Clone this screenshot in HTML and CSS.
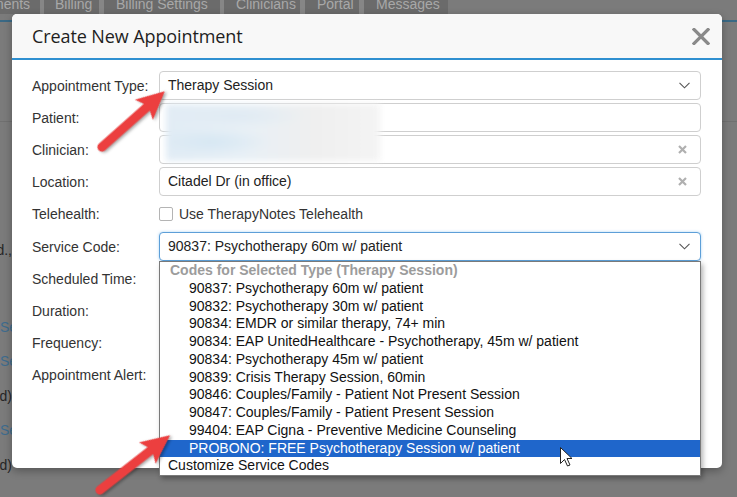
FILE: index.html
```html
<!DOCTYPE html>
<html>
<head>
<meta charset="utf-8">
<link rel="stylesheet" href="styles.css">
</head>
<body>
<div class="page">
  <nav class="tabs">
    <span class="tab t0">ments</span>
    <span class="tab t1">Billing</span>
    <span class="tab t2">Billing Settings</span>
    <span class="tab t3">Clinicians</span>
    <span class="tab t4">Portal</span>
    <span class="tab t5">Messages</span>
  </nav>
  <div class="rule-blue"></div>
  <div class="rule-gray"></div>
  <div class="frag f1 end"><span>Sched.,</span></div>
  <div class="frag f2 link"><span>Session</span></div>
  <div class="frag f3 link"><span>Session</span></div>
  <div class="frag f4 end"><span>(Ended)</span></div>
  <div class="frag f5 link"><span>Session</span></div>
  <div class="frag f6 end"><span>(Ended)</span></div>
</div>

<div class="modal">
  <div class="modal-head">
    <h1>Create New Appointment</h1>
    <svg class="close" width="18" height="17" viewBox="0 0 18 17"><path d="M2 1.5 L16 15.5 M16 1.5 L2 15.5" stroke="#8a8a8a" stroke-width="3.2" stroke-linecap="square"/></svg>
  </div>
  <div class="modal-body">
    <div class="row">
      <label>Appointment Type:</label>
      <div class="field">Therapy Session
        <svg class="chev" width="11" height="7" viewBox="0 0 11 7"><path d="M0.5 0.8 L5.5 5.8 L10.5 0.8" fill="none" stroke="#555" stroke-width="1.1"/></svg>
      </div>
    </div>
    <div class="row">
      <label>Patient:</label>
      <div class="field"></div>
    </div>
    <div class="row">
      <label>Clinician:</label>
      <div class="field">
        <svg class="clear" width="9" height="9" viewBox="0 0 9 9"><path d="M1 1 L8 8 M8 1 L1 8" stroke="#b0b0b0" stroke-width="2.2"/></svg>
      </div>
    </div>
    <div class="row">
      <label>Location:</label>
      <div class="field">Citadel Dr (in office)
        <svg class="clear" width="9" height="9" viewBox="0 0 9 9"><path d="M1 1 L8 8 M8 1 L1 8" stroke="#b0b0b0" stroke-width="2.2"/></svg>
      </div>
    </div>
    <div class="row tall">
      <label>Telehealth:</label>
      <div class="check-wrap"><span class="checkbox"></span>Use TherapyNotes Telehealth</div>
    </div>
    <div class="row">
      <label>Service Code:</label>
      <div class="field focus">90837: Psychotherapy 60m w/ patient
        <svg class="chev" width="11" height="7" viewBox="0 0 11 7"><path d="M0.5 0.8 L5.5 5.8 L10.5 0.8" fill="none" stroke="#555" stroke-width="1.1"/></svg>
      </div>
    </div>
    <div class="row"><label>Scheduled Time:</label></div>
    <div class="row"><label>Duration:</label></div>
    <div class="row"><label>Frequency:</label></div>
    <div class="row"><label>Appointment Alert:</label></div>
  </div>

  <div class="redact"></div>

  <div class="dropdown">
    <div class="grp">Codes for Selected Type (Therapy Session)</div>
    <div class="opt">90837: Psychotherapy 60m w/ patient</div>
    <div class="opt">90832: Psychotherapy 30m w/ patient</div>
    <div class="opt">90834: EMDR or similar therapy, 74+ min</div>
    <div class="opt">90834: EAP UnitedHealthcare - Psychotherapy, 45m w/ patient</div>
    <div class="opt">90834: Psychotherapy 45m w/ patient</div>
    <div class="opt">90839: Crisis Therapy Session, 60min</div>
    <div class="opt">90846: Couples/Family - Patient Not Present Session</div>
    <div class="opt">90847: Couples/Family - Patient Present Session</div>
    <div class="opt">99404: EAP Cigna - Preventive Medicine Counseling</div>
    <div class="opt sel">PROBONO: FREE Psychotherapy Session w/ patient</div>
    <div class="opt top">Customize Service Codes</div>
  </div>
</div>

<svg class="annot" width="737" height="497" viewBox="0 0 737 497">
  <g class="arrow" transform="translate(102,147) rotate(-41.6)">
    <path d="M0,-4.6 L60,-4.6 L56,-13.5 L84,0 L56,13.5 L60,4.6 L0,4.6 A4.6,4.6 0 0 1 0,-4.6 Z" fill="#ec3f3f"/>
  </g>
  <g class="arrow" transform="translate(100,490) rotate(-38)">
    <path d="M0,-4.6 L64,-4.6 L60,-13.5 L89,0 L60,13.5 L64,4.6 L0,4.6 A4.6,4.6 0 0 1 0,-4.6 Z" fill="#ec3f3f"/>
  </g>
  <path d="M560.5,447.5 L560.5,463.5 L564.5,459.5 L567.5,466 L570,465 L567,458.5 L572,458.5 Z" fill="#fff" stroke="#222" stroke-width="1" stroke-linejoin="round"/>
</svg>
</body>
</html>
```
FILE: styles.css
```css
* { box-sizing: border-box; margin: 0; padding: 0; }
html, body { width: 737px; height: 497px; overflow: hidden; }
body {
  background: #7b7b7b;
  font-family: "Liberation Sans", Arial, sans-serif;
  font-size: 14px;
  color: #333;
  position: relative;
}

/* background page */
.tabs { display: flex; height: 14px; overflow: hidden; }
.tab {
  background: #6b6b6b;
  color: #a8a8a8;
  line-height: 8px;
  height: 14px;
  padding-left: 11px;
  white-space: nowrap;
  overflow: hidden;
}
.t0 { width: 48px; margin-left: -8px; padding-left: 0; }
.t1 { width: 59px; border-left: 4px solid #868686; }
.t2 { width: 121px; border-left: 5px solid #868686; padding-left: 12px; }
.t3 { width: 80px; border-left: 4px solid #868686; padding-left: 12px; }
.t4 { width: 59px; border-left: 5px solid #868686; padding-left: 12px; }
.t5 { width: 89px; border-left: 5px solid #868686; padding-left: 12px; }

.rule-blue { margin-top: 6px; height: 2px; background: #3a6985; }
.rule-gray { margin-top: 99px; height: 1px; background: #707070; }

.frag {
  width: 16px;
  height: 16px;
  line-height: 16px;
  overflow: hidden;
  display: flex;
  white-space: nowrap;
  color: #262626;
}
.frag span { flex: none; }
.frag.end { justify-content: flex-end; width: 12px; }
.frag.link { color: #3e6c8e; }
.f1 { margin-top: 120px; }
.f2 { margin-top: 61px; }
.f3 { margin-top: 18px; }
.f4 { margin-top: 19px; }
.f5 { margin-top: 18px; }
.f6 { margin-top: 19px; }

/* modal */
.modal {
  position: absolute;
  left: 12px;
  top: 14px;
  width: 710px;
  height: 454px;
  background: #fff;
  border-radius: 5px;
  box-shadow: 0 3px 9px rgba(0, 0, 0, 0.3);
}
.modal-head {
  height: 46px;
  background: #f8f8f8;
  border-bottom: 2px solid #2e8fd0;
  border-radius: 5px 5px 0 0;
  display: flex;
  align-items: center;
  justify-content: space-between;
  padding: 0 12px 0 20px;
}
.modal-head h1 {
  font-family: "Open Sans", "Liberation Sans", sans-serif;
  font-size: 18px;
  font-weight: 400;
  color: #1e1e1e;
  letter-spacing: -0.1px;
}
.close { display: block; margin-top: 1px; }

.modal-body { padding: 11px 21px 0 20px; }
.row { display: flex; height: 29px; margin-bottom: 3px; align-items: center; }
.row.tall { height: 30px; }
.row label { width: 127px; flex: none; color: #333; }

.field {
  width: 542px;
  height: 29px;
  border: 1px solid #cfcfcf;
  border-radius: 4px;
  padding: 0 8px;
  line-height: 27px;
  color: #222;
  display: flex;
  align-items: center;
  justify-content: space-between;
  background: #fff;
}
.field.focus {
  border-color: #5d9fd8;
  box-shadow: 0 0 3px rgba(102, 175, 233, 0.55);
}
.chev { margin-right: 2px; }
.clear { margin-left: auto; margin-right: 5px; }

.check-wrap { display: flex; align-items: center; color: #333; }
.checkbox {
  width: 14px;
  height: 14px;
  border: 1px solid #b4b4b4;
  border-radius: 2px;
  margin-right: 6px;
  background: #fff;
}

.redact {
  position: absolute;
  left: 154px;
  top: 90px;
  width: 214px;
  height: 57px;
  background:
    radial-gradient(ellipse 60px 14px at 45px 38px, #d6e7f3, rgba(214,231,243,0)),
    radial-gradient(ellipse 70px 12px at 70px 12px, #dfeaf3, rgba(223,234,243,0)),
    linear-gradient(90deg, #e1ecf5 0%, #e8f0f6 35%, #efefef 70%, #f4f4f4 100%);
  filter: blur(3px);
}

.dropdown {
  position: absolute;
  left: 147px;
  top: 247px;
  width: 542px;
  height: 215px;
  background: #fff;
  border: 1px solid #7a7a7a;
  box-shadow: 2px 3px 5px rgba(0, 0, 0, 0.3);
  font-size: 14px;
  line-height: 17.75px;
  color: #111;
}
.grp { font-weight: 700; color: #9c9c9c; padding-left: 10px; }
.opt { padding-left: 29px; white-space: nowrap; }
.opt.sel { background: #1f66cb; color: #fff; }
.opt.top { padding-left: 8px; }

.annot { position: absolute; left: 0; top: 0; pointer-events: none; }
.arrow { filter: drop-shadow(1px 2px 1.5px rgba(0, 0, 0, 0.35)); }
```
